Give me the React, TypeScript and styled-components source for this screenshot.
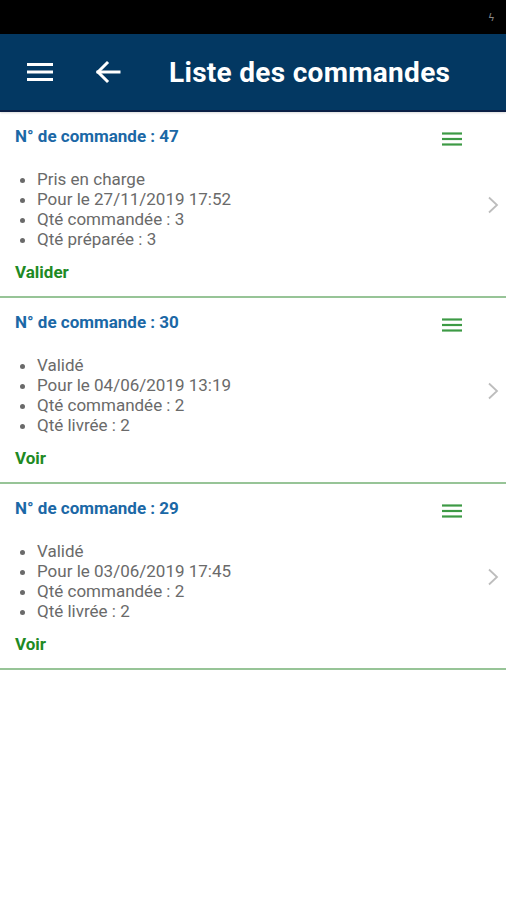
import * as React from 'react';
import styled, { createGlobalStyle } from 'styled-components';

const GlobalStyle = createGlobalStyle`
  body {
    margin: 0;
    background: #ffffff;
    font-family: Roboto, "Liberation Sans", Arial, sans-serif;
  }
`;

interface IOrder {
  id: number;
  status: string;
  date: string;
  ordered: number;
  doneLabel: string;
  done: number;
  action: string;
}

const orders: IOrder[] = [
  { id: 47, status: 'Pris en charge', date: '27/11/2019 17:52', ordered: 3, doneLabel: 'Qté préparée', done: 3, action: 'Valider' },
  { id: 30, status: 'Validé', date: '04/06/2019 13:19', ordered: 2, doneLabel: 'Qté livrée', done: 2, action: 'Voir' },
  { id: 29, status: 'Validé', date: '03/06/2019 17:45', ordered: 2, doneLabel: 'Qté livrée', done: 2, action: 'Voir' },
];

const Screen = styled.div`
  width: 506px;
  min-height: 900px;
  background: #ffffff;
`;

const StatusBar = styled.div`
  height: 34px;
  background: #000000;
  display: flex;
  align-items: center;
  justify-content: flex-end;
  padding-right: 12px;
  box-sizing: border-box;
  color: #888;
  font-size: 10px;
`;

const Header = styled.header`
  height: 76px;
  background: #033862;
  display: flex;
  align-items: center;
  border-bottom: 2px solid #0b1f45;
  box-shadow: 0 1px 2px rgba(0, 0, 0, 0.15);
`;

const IconButton = styled.div`
  width: 26px;
  height: 26px;
  display: flex;
  align-items: center;
  justify-content: center;
`;

const Burger = styled(IconButton)`
  margin-left: 27px;
`;

const Back = styled(IconButton)`
  margin-left: 42px;
`;

const Title = styled.h1`
  margin: 0 0 0 48px;
  color: #ffffff;
  font-size: 28px;
  font-weight: 700;
  letter-spacing: 0.3px;
`;

const Card = styled.section`
  height: 186px;
  border-bottom: 2px solid #97c497;
  padding: 13px 15px 0 15px;
  box-sizing: border-box;
`;

const CardHead = styled.div`
  display: flex;
  align-items: center;
  justify-content: space-between;
  height: 22px;
`;

const OrderNo = styled.div`
  color: #1b68a6;
  font-size: 17px;
  font-weight: 700;
`;

const MenuIcon = styled.div`
  margin-right: 29px;
  margin-top: 5px;
  display: flex;
`;

const Body = styled.div`
  display: flex;
  align-items: flex-start;
  justify-content: space-between;
  margin-top: 22px;
`;

const List = styled.ul`
  margin: 0;
  padding: 0 0 0 22px;
  color: #6a6a6a;
  font-size: 17px;
  line-height: 20px;
`;

const Chevron = styled.div`
  margin-right: -8px;
  margin-top: 27px;
  display: flex;
`;

const Action = styled.div`
  margin-top: 13px;
  color: #1e8a24;
  font-size: 17px;
  font-weight: 700;
`;

const OrderCard: React.FunctionComponent<{ order: IOrder }> = ({ order }) => (
  <Card>
    <CardHead>
      <OrderNo>N° de commande : {order.id}</OrderNo>
      <MenuIcon>
        <svg width="20" height="14" viewBox="0 0 20 14">
          <g stroke="#3d9a45" strokeWidth="2.2">
            <line x1="0" y1="1.5" x2="20" y2="1.5" />
            <line x1="0" y1="7" x2="20" y2="7" />
            <line x1="0" y1="12.5" x2="20" y2="12.5" />
          </g>
        </svg>
      </MenuIcon>
    </CardHead>
    <Body>
      <List>
        <li>{order.status}</li>
        <li>Pour le {order.date}</li>
        <li>Qté commandée : {order.ordered}</li>
        <li>{order.doneLabel} : {order.done}</li>
      </List>
      <Chevron>
        <svg width="12" height="18" viewBox="0 0 12 18">
          <polyline points="2,1.5 10,9 2,16.5" fill="none" stroke="#bdbdbd" strokeWidth="1.8" />
        </svg>
      </Chevron>
    </Body>
    <Action>{order.action}</Action>
  </Card>
);

export default function App() {
  return (
    <Screen>
      <GlobalStyle />
      <StatusBar>ϟ</StatusBar>
      <Header>
        <Burger>
          <svg width="26" height="20" viewBox="0 0 26 20">
            <g stroke="#ffffff" strokeWidth="3">
              <line x1="0" y1="2.5" x2="26" y2="2.5" />
              <line x1="0" y1="10" x2="26" y2="10" />
              <line x1="0" y1="17.5" x2="26" y2="17.5" />
            </g>
          </svg>
        </Burger>
        <Back>
          <svg width="26" height="24" viewBox="0 0 26 24">
            <g fill="none" stroke="#ffffff" strokeWidth="3" strokeLinecap="square">
              <line x1="3" y1="12" x2="24" y2="12" />
              <polyline points="12,3 3,12 12,21" />
            </g>
          </svg>
        </Back>
        <Title>Liste des commandes</Title>
      </Header>
      {orders.map((o) => (
        <OrderCard key={o.id} order={o} />
      ))}
    </Screen>
  );
}
